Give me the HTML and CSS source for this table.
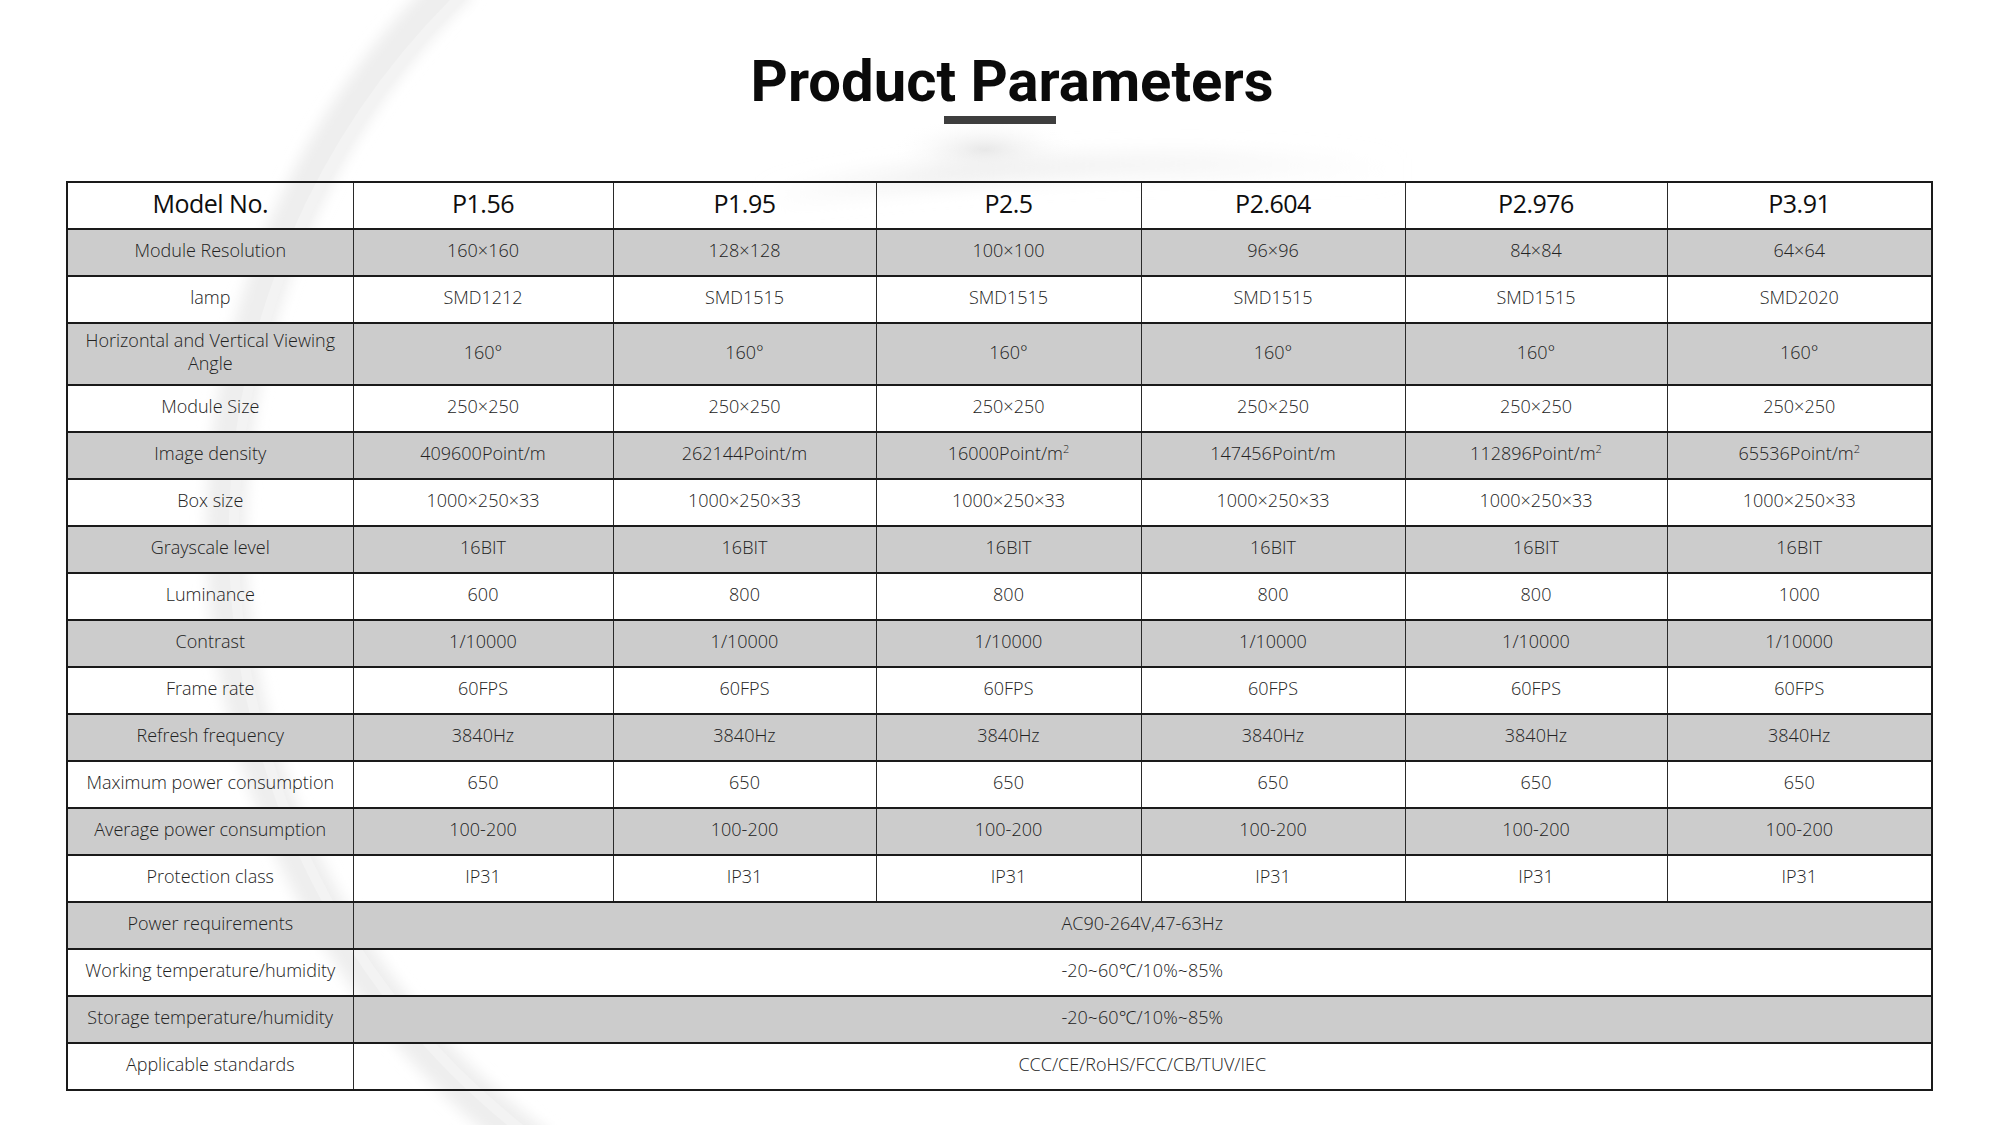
FILE: index.html
```html
<!DOCTYPE html>
<html lang="en">
<head>
<meta charset="utf-8">
<title>Product Parameters</title>
<link rel="stylesheet" href="styles.css">
</head>
<body>
<div class="page">
  <svg class="bg-deco" viewBox="0 0 2000 1125" width="2000" height="1125" aria-hidden="true">
    <defs>
      <filter id="soft" x="-20%" y="-20%" width="140%" height="140%">
        <feGaussianBlur stdDeviation="7"/>
      </filter>
      <filter id="softer" x="-30%" y="-100%" width="160%" height="300%">
        <feGaussianBlur stdDeviation="10"/>
      </filter>
      <radialGradient id="blob" cx="0.5" cy="0.5" r="0.5">
        <stop offset="0" stop-color="#e4e4e4" stop-opacity="0.9"/>
        <stop offset="1" stop-color="#ffffff" stop-opacity="0"/>
      </radialGradient>
      <linearGradient id="arcGrad" x1="0" y1="0" x2="1" y2="0">
        <stop offset="0" stop-color="#f0f0f0" stop-opacity="0"/>
        <stop offset="0.3" stop-color="#eeeeee" stop-opacity="1"/>
        <stop offset="0.7" stop-color="#f3f3f3" stop-opacity="0.8"/>
        <stop offset="1" stop-color="#f6f6f6" stop-opacity="0"/>
      </linearGradient>
    </defs>
    <path d="M 460 -20 A 766 766 0 0 0 540 1150" fill="none" stroke="#eeeeee" stroke-width="40" filter="url(#soft)"/>
    <path d="M 478 -20 A 756 756 0 0 0 548 1150" fill="none" stroke="#f3f3f3" stroke-width="10"/>
    <ellipse cx="985" cy="150" rx="95" ry="34" fill="url(#blob)"/>
    <path d="M 760 200 Q 1020 150 1400 170" fill="none" stroke="url(#arcGrad)" stroke-width="22" filter="url(#softer)"/>
  </svg>

  <header class="title-block">
    <h1 class="title">Product Parameters</h1>
    <div class="title-bar"></div>
  </header>

  <table class="spec">
    <colgroup>
      <col class="c-label">
      <col class="c-260">
      <col class="c-263">
      <col class="c-265">
      <col class="c-264">
      <col class="c-262">
      <col class="c-265">
    </colgroup>
    <thead>
      <tr class="head">
        <th>Model No.</th><th>P1.56</th><th>P1.95</th><th>P2.5</th><th>P2.604</th><th>P2.976</th><th>P3.91</th>
      </tr>
    </thead>
    <tbody>
      <tr class="gray"><td>Module Resolution</td><td>160×160</td><td>128×128</td><td>100×100</td><td>96×96</td><td>84×84</td><td>64×64</td></tr>
      <tr><td>lamp</td><td>SMD1212</td><td>SMD1515</td><td>SMD1515</td><td>SMD1515</td><td>SMD1515</td><td>SMD2020</td></tr>
      <tr class="gray tall"><td>Horizontal and Vertical Viewing Angle</td><td>160°</td><td>160°</td><td>160°</td><td>160°</td><td>160°</td><td>160°</td></tr>
      <tr><td>Module Size</td><td>250×250</td><td>250×250</td><td>250×250</td><td>250×250</td><td>250×250</td><td>250×250</td></tr>
      <tr class="gray"><td>Image density</td><td>409600Point/m</td><td>262144Point/m</td><td>16000Point/m<sup>2</sup></td><td>147456Point/m</td><td>112896Point/m<sup>2</sup></td><td>65536Point/m<sup>2</sup></td></tr>
      <tr><td>Box size</td><td>1000×250×33</td><td>1000×250×33</td><td>1000×250×33</td><td>1000×250×33</td><td>1000×250×33</td><td>1000×250×33</td></tr>
      <tr class="gray"><td>Grayscale level</td><td>16BIT</td><td>16BIT</td><td>16BIT</td><td>16BIT</td><td>16BIT</td><td>16BIT</td></tr>
      <tr><td>Luminance</td><td>600</td><td>800</td><td>800</td><td>800</td><td>800</td><td>1000</td></tr>
      <tr class="gray"><td>Contrast</td><td>1/10000</td><td>1/10000</td><td>1/10000</td><td>1/10000</td><td>1/10000</td><td>1/10000</td></tr>
      <tr><td>Frame rate</td><td>60FPS</td><td>60FPS</td><td>60FPS</td><td>60FPS</td><td>60FPS</td><td>60FPS</td></tr>
      <tr class="gray"><td>Refresh frequency</td><td>3840Hz</td><td>3840Hz</td><td>3840Hz</td><td>3840Hz</td><td>3840Hz</td><td>3840Hz</td></tr>
      <tr><td>Maximum power consumption</td><td>650</td><td>650</td><td>650</td><td>650</td><td>650</td><td>650</td></tr>
      <tr class="gray"><td>Average power consumption</td><td>100-200</td><td>100-200</td><td>100-200</td><td>100-200</td><td>100-200</td><td>100-200</td></tr>
      <tr><td>Protection class</td><td>IP31</td><td>IP31</td><td>IP31</td><td>IP31</td><td>IP31</td><td>IP31</td></tr>
      <tr class="gray"><td>Power requirements</td><td colspan="6">AC90-264V,47-63Hz</td></tr>
      <tr><td>Working temperature/humidity</td><td colspan="6">-20~60℃/10%~85%</td></tr>
      <tr class="gray"><td>Storage temperature/humidity</td><td colspan="6">-20~60℃/10%~85%</td></tr>
      <tr><td>Applicable standards</td><td colspan="6">CCC/CE/RoHS/FCC/CB/TUV/IEC</td></tr>
    </tbody>
  </table>
</div>
</body>
</html>
```

FILE: styles.css
```css
html, body {
  margin: 0;
  padding: 0;
  background: #ffffff;
}

.page {
  position: relative;
  width: 2000px;
  height: 1125px;
  overflow: hidden;
  font-family: "Open Sans", "Noto Sans", "Liberation Sans", sans-serif;
  color: #222222;
}

.bg-deco {
  position: absolute;
  left: 0;
  top: 0;
  z-index: 0;
  pointer-events: none;
}

.title-block {
  position: relative;
  z-index: 1;
  display: flex;
  flex-direction: column;
  align-items: center;
  padding-top: 48px;
}

.title {
  margin: 0;
  padding-left: 24px;
  font-family: Roboto, "Noto Sans", "Liberation Sans", sans-serif;
  font-weight: 700;
  font-size: 58px;
  line-height: 66px;
  color: #0a0a0a;
}

.title-bar {
  width: 112px;
  height: 8px;
  margin-top: 2px;
  background: #3e3e3e;
}

.spec {
  position: relative;
  z-index: 1;
  margin-top: 57px;
  margin-left: 66px;
  width: 1865px;
  border-collapse: collapse;
  table-layout: fixed;
  border: 2px solid #1a1a1a;
}

.c-label { width: 286px; }
.c-260 { width: 260px; }
.c-262 { width: 262px; }
.c-263 { width: 263px; }
.c-264 { width: 264px; }
.c-265 { width: 265px; }

.spec th,
.spec td {
  padding: 0 4px 4px;
  text-align: center;
  vertical-align: middle;
  border-top: 2px solid #1a1a1a;
  border-bottom: 2px solid #1a1a1a;
  border-left: 1px solid #2a2a2a;
  border-right: 1px solid #2a2a2a;
  font-size: 18px;
  font-weight: 300;
  line-height: 23px;
  color: #222222;
}

.spec tr {
  height: 47px;
}

.spec tr.tall {
  height: 62px;
}

.spec tr.head th {
  font-size: 25px;
  font-weight: 400;
  color: #0e0e0e;
  letter-spacing: -0.5px;
}

.spec tr.gray td {
  background: #cccccc;
}

.spec td:first-child {
  border-left: 2px solid #1a1a1a;
}

.spec td:last-child {
  border-right: 2px solid #1a1a1a;
}

.spec sup {
  font-size: 11px;
  line-height: 0;
  vertical-align: 7px;
}
```
